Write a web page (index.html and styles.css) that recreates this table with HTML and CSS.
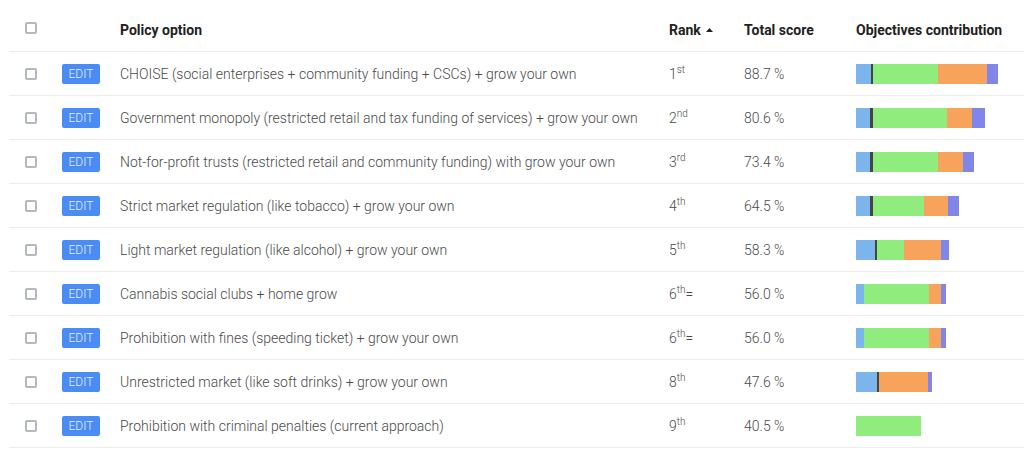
FILE: index.html
```html
<!DOCTYPE html>
<html lang="en">
<head>
<meta charset="utf-8">
<title>Policy options</title>
<link rel="stylesheet" href="styles.css">
</head>
<body>
<div class="wrap">
<table class="grid">
  <colgroup>
    <col class="c-check"><col class="c-edit"><col class="c-name"><col class="c-rank"><col class="c-score"><col class="c-obj">
  </colgroup>
  <thead>
    <tr>
      <th class="cell-check"><span class="box"></span></th>
      <th></th>
      <th>Policy option</th>
      <th>Rank <svg class="sort" width="7" height="4" viewBox="0 0 7 4"><path d="M0 4 L3.5 0 L7 4 Z" fill="#222"/></svg></th>
      <th>Total score</th>
      <th>Objectives contribution</th>
    </tr>
  </thead>
  <tbody>
    <tr>
      <td class="cell-check"><span class="box"></span></td>
      <td><button class="edit">EDIT</button></td>
      <td>CHOISE (social enterprises + community funding + CSCs) + grow your own</td>
      <td>1<sup>st</sup></td>
      <td>88.7 %</td>
      <td><div class="bar"><span class="s blue" style="width:15px"></span><span class="s dark" style="width:2px"></span><span class="s green" style="width:65px"></span><span class="s orange" style="width:49px"></span><span class="s purple" style="width:11px"></span></div></td>
    </tr>
    <tr>
      <td class="cell-check"><span class="box"></span></td>
      <td><button class="edit">EDIT</button></td>
      <td>Government monopoly (restricted retail and tax funding of services) + grow your own</td>
      <td>2<sup>nd</sup></td>
      <td>80.6 %</td>
      <td><div class="bar"><span class="s blue" style="width:14px"></span><span class="s dark" style="width:3px"></span><span class="s green" style="width:74px"></span><span class="s orange" style="width:25px"></span><span class="s purple" style="width:13px"></span></div></td>
    </tr>
    <tr>
      <td class="cell-check"><span class="box"></span></td>
      <td><button class="edit">EDIT</button></td>
      <td>Not-for-profit trusts (restricted retail and community funding) with grow your own</td>
      <td>3<sup>rd</sup></td>
      <td>73.4 %</td>
      <td><div class="bar"><span class="s blue" style="width:14px"></span><span class="s dark" style="width:3px"></span><span class="s green" style="width:65px"></span><span class="s orange" style="width:25px"></span><span class="s purple" style="width:11px"></span></div></td>
    </tr>
    <tr>
      <td class="cell-check"><span class="box"></span></td>
      <td><button class="edit">EDIT</button></td>
      <td>Strict market regulation (like tobacco) + grow your own</td>
      <td>4<sup>th</sup></td>
      <td>64.5 %</td>
      <td><div class="bar"><span class="s blue" style="width:14px"></span><span class="s dark" style="width:3px"></span><span class="s green" style="width:51px"></span><span class="s orange" style="width:24px"></span><span class="s purple" style="width:11px"></span></div></td>
    </tr>
    <tr>
      <td class="cell-check"><span class="box"></span></td>
      <td><button class="edit">EDIT</button></td>
      <td>Light market regulation (like alcohol) + grow your own</td>
      <td>5<sup>th</sup></td>
      <td>58.3 %</td>
      <td><div class="bar"><span class="s blue" style="width:19px"></span><span class="s dark" style="width:2px"></span><span class="s green" style="width:27px"></span><span class="s orange" style="width:37px"></span><span class="s purple" style="width:8px"></span></div></td>
    </tr>
    <tr>
      <td class="cell-check"><span class="box"></span></td>
      <td><button class="edit">EDIT</button></td>
      <td>Cannabis social clubs + home grow</td>
      <td>6<sup>th</sup>=</td>
      <td>56.0 %</td>
      <td><div class="bar"><span class="s blue" style="width:8px"></span><span class="s green" style="width:65px"></span><span class="s orange" style="width:12px"></span><span class="s purple" style="width:5px"></span></div></td>
    </tr>
    <tr>
      <td class="cell-check"><span class="box"></span></td>
      <td><button class="edit">EDIT</button></td>
      <td>Prohibition with fines (speeding ticket) + grow your own</td>
      <td>6<sup>th</sup>=</td>
      <td>56.0 %</td>
      <td><div class="bar"><span class="s blue" style="width:8px"></span><span class="s green" style="width:65px"></span><span class="s orange" style="width:12px"></span><span class="s purple" style="width:5px"></span></div></td>
    </tr>
    <tr>
      <td class="cell-check"><span class="box"></span></td>
      <td><button class="edit">EDIT</button></td>
      <td>Unrestricted market (like soft drinks) + grow your own</td>
      <td>8<sup>th</sup></td>
      <td>47.6 %</td>
      <td><div class="bar"><span class="s blue" style="width:21px"></span><span class="s dark" style="width:2px"></span><span class="s orange" style="width:49px"></span><span class="s purple" style="width:4px"></span></div></td>
    </tr>
    <tr>
      <td class="cell-check"><span class="box"></span></td>
      <td><button class="edit">EDIT</button></td>
      <td>Prohibition with criminal penalties (current approach)</td>
      <td>9<sup>th</sup></td>
      <td>40.5 %</td>
      <td><div class="bar"><span class="s green" style="width:65px"></span></div></td>
    </tr>
  </tbody>
</table>
</div>
</body>
</html>
```

FILE: styles.css
```css
html, body {
  margin: 0;
  padding: 0;
  background: #ffffff;
}
.wrap {
  padding: 8px 0 0 9px;
}
.grid {
  width: 100%;
  border-collapse: collapse;
  table-layout: fixed;
  font-family: Roboto, "Liberation Sans", sans-serif;
  font-size: 14px;
  font-weight: 300;
  color: #4a4a4a;
}
.c-check { width: 53px; }
.c-edit { width: 58px; }
.c-name { width: 549px; }
.c-rank { width: 75px; }
.c-score { width: 112px; }
.c-obj { width: auto; }

.grid th,
.grid td {
  height: 43px;
  padding: 0;
  text-align: left;
  vertical-align: middle;
  border-bottom: 1px solid #ececec;
  white-space: nowrap;
}
.grid th {
  font-weight: 700;
  color: #212121;
}
.cell-check {
  padding-left: 16px !important;
}
.box {
  display: block;
  box-sizing: border-box;
  width: 12px;
  height: 12px;
  border: 2px solid #b3b9bf;
  border-radius: 2px;
  background: #fff;
}
thead .box {
  margin-top: -3px;
}
.sort {
  display: inline-block;
  vertical-align: middle;
  margin-left: 2px;
  margin-top: -2px;
}
.edit {
  display: inline-flex;
  align-items: center;
  justify-content: center;
  width: 38px;
  height: 20px;
  padding: 0;
  border: none;
  border-radius: 2px;
  background: #4b8bf4;
  color: #e8f0fe;
  font-family: Roboto, "Liberation Sans", sans-serif;
  font-size: 12px;
  font-weight: 300;
  vertical-align: middle;
}
sup {
  font-size: 10px;
  line-height: 0;
  vertical-align: 6px;
}
.bar {
  display: flex;
  height: 20px;
}
.s {
  display: block;
  height: 100%;
}
.blue { background: #7cb5ec; }
.dark { background: #434348; }
.green { background: #90ed7d; }
.orange { background: #f7a35c; }
.purple { background: #8085e9; }
```
